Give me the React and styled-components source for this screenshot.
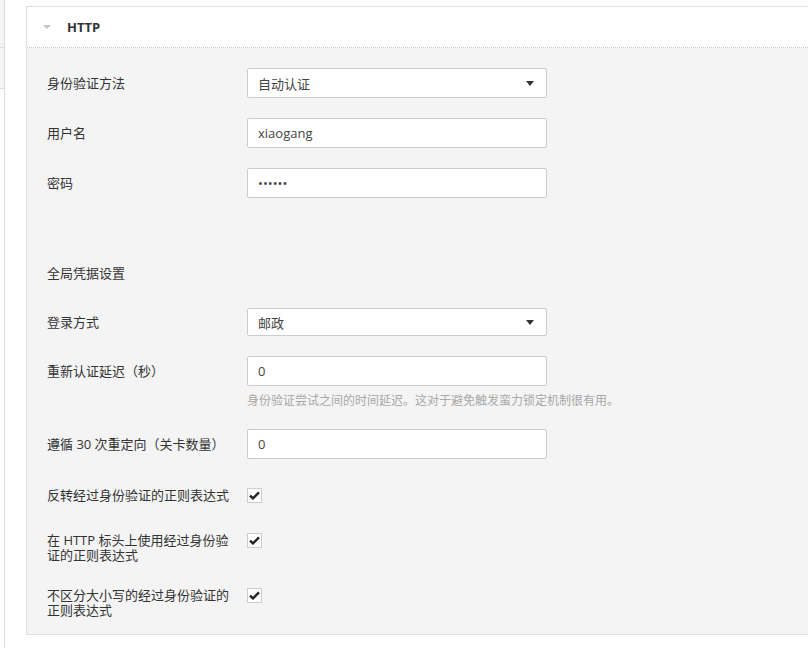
import React from "react";
import styled, { createGlobalStyle } from "styled-components";

const GlobalStyle = createGlobalStyle`
  body {
    margin: 0;
    background: #fff;
    overflow: hidden;
    font-family: "Open Sans", "Noto Sans CJK SC", sans-serif;
    color: #333;
  }
`;

const Page = styled.div`
  display: flex;
  width: 840px;
  height: 648px;
`;

const Sidebar = styled.div`
  width: 4px;
  border-right: 1px solid #ddd;
  flex-shrink: 0;
`;

const SideItem = styled.div`
  height: ${(p) => p.h}px;
  background: #f4f4f4;
  border-bottom: 1px solid #ddd;
`;

const Panel = styled.section`
  flex: 1;
  margin: 6px 0 0 21px;
  align-self: flex-start;
  border: 1px solid #ddd;
  border-right: none;
`;

const PanelHeader = styled.header`
  display: flex;
  align-items: center;
  height: 40px;
  padding-left: 16px;
  background: #fff;
  border-bottom: 1px dotted #ccc;
`;

const Caret = styled.span`
  width: 0;
  height: 0;
  border-left: 4px solid transparent;
  border-right: 4px solid transparent;
  border-top: 4px solid #c4c4c4;
  margin-right: 16px;
`;

const Title = styled.h3`
  margin: 0;
  font-size: 13px;
  font-weight: 700;
  color: #333;
`;

const Body = styled.div`
  background: #f4f4f4;
  padding: 20px 0 16px 20px;
`;

const FieldRow = styled.div`
  display: grid;
  grid-template-columns: 185px 300px;
  column-gap: 15px;
  align-items: start;
  margin-bottom: 20px;
`;

const Label = styled.label`
  font-size: 13px;
  line-height: ${(p) => p.lh || 30}px;
  color: #333;
`;

const Input = styled.input`
  box-sizing: border-box;
  width: 300px;
  height: 30px;
  padding: 0 10px;
  border: 1px solid #ccc;
  border-radius: 2px;
  background: #fff;
  font-family: inherit;
  font-size: 13px;
  color: #444;
  outline: none;
`;

const Select = styled.div`
  box-sizing: border-box;
  display: flex;
  align-items: center;
  justify-content: space-between;
  width: 300px;
  height: ${(p) => p.h || 30}px;
  padding: 0 12px 0 10px;
  border: 1px solid #ccc;
  border-radius: 2px;
  background: #fff;
  font-size: 13px;
  color: #444;
`;

const Arrow = styled.span`
  width: 0;
  height: 0;
  border-left: 4px solid transparent;
  border-right: 4px solid transparent;
  border-top: 5px solid #333;
`;

const Help = styled.div`
  margin-top: 7px;
  font-size: 12px;
  line-height: 16px;
  white-space: nowrap;
  color: #a8a8a8;
`;

const Section = styled.div`
  margin: 65px 0 25px;
  font-size: 13px;
  line-height: 20px;
  color: #333;
`;

const Checks = styled.div`
  padding-top: 9px;
`;

const CheckRow = styled.div`
  display: grid;
  grid-template-columns: 185px 15px;
  column-gap: 15px;
  align-items: start;
  min-height: 20px;
  margin-bottom: 25px;
  &:last-child {
    margin-bottom: 0;
  }
`;

const CheckBox = styled.span`
  box-sizing: border-box;
  display: flex;
  align-items: center;
  justify-content: center;
  width: 15px;
  height: 15px;
  border: 1px solid #ccc;
  background: #fff;
`;

const Check = () => (
  <CheckBox>
    <svg width="11" height="9" viewBox="0 0 11 9">
      <path d="M1 4.6 L4 7.4 L10 1.4" fill="none" stroke="#222" strokeWidth="2.4" />
    </svg>
  </CheckBox>
);

const checks = [
  "反转经过身份验证的正则表达式",
  "在 HTTP 标头上使用经过身份验证的正则表达式",
  "不区分大小写的经过身份验证的正则表达式",
];

export default function App() {
  return (
    <>
      <GlobalStyle />
      <Page>
        <Sidebar>
          <SideItem h={47} />
          <SideItem h={40} />
        </Sidebar>
        <Panel>
          <PanelHeader>
            <Caret />
            <Title>HTTP</Title>
          </PanelHeader>
          <Body>
            <FieldRow>
              <Label>身份验证方法</Label>
              <Select>
                自动认证
                <Arrow />
              </Select>
            </FieldRow>
            <FieldRow>
              <Label>用户名</Label>
              <Input defaultValue="xiaogang" />
            </FieldRow>
            <FieldRow>
              <Label>密码</Label>
              <Input type="password" defaultValue="123456" />
            </FieldRow>

            <Section>全局凭据设置</Section>

            <FieldRow>
              <Label lh={28}>登录方式</Label>
              <Select h={28}>
                邮政
                <Arrow />
              </Select>
            </FieldRow>
            <FieldRow>
              <Label>重新认证延迟（秒）</Label>
              <div>
                <Input defaultValue="0" />
                <Help>身份验证尝试之间的时间延迟。这对于避免触发蛮力锁定机制很有用。</Help>
              </div>
            </FieldRow>
            <FieldRow>
              <Label>遵循 30 次重定向（关卡数量）</Label>
              <Input defaultValue="0" />
            </FieldRow>

            <Checks>
              {checks.map((c) => (
                <CheckRow key={c}>
                  <Label lh={15}>{c}</Label>
                  <Check />
                </CheckRow>
              ))}
            </Checks>
          </Body>
        </Panel>
      </Page>
    </>
  );
}
